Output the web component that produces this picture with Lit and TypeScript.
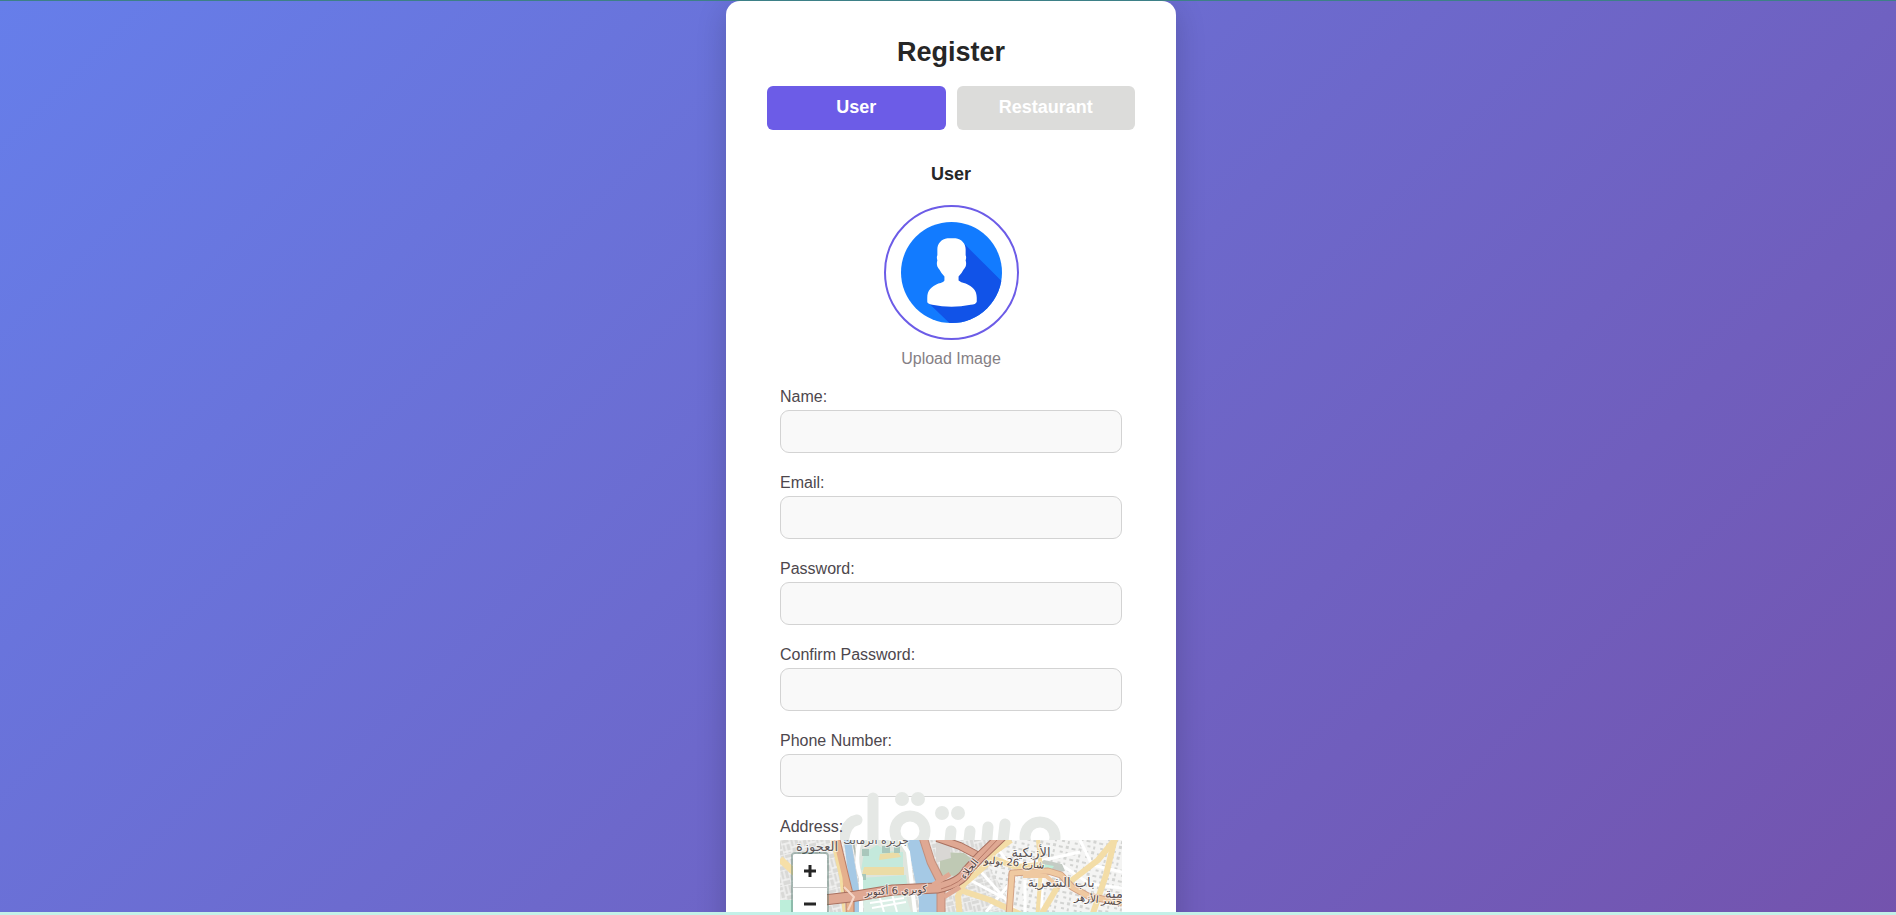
import { LitElement, html, css, svg } from "lit";
import { customElement, state } from "lit/decorators.js";

/** Street map of central Cairo with zoom buttons. */
@customElement("street-map")
class StreetMap extends LitElement {
  static styles = css`
    :host { display: block; position: relative; height: 220px; overflow: hidden; background: #e9e9e7; }
    .tiles { display: block; width: 100%; height: 220px; }
    .zoom {
      position: absolute; top: 12px; left: 11px; display: grid;
      border: 2px solid rgba(70, 110, 100, 0.4); border-radius: 4px; overflow: hidden;
    }
    .zoom button {
      width: 34px; height: 33px; padding: 0; border: 0; background: #fff; color: #262626;
      display: grid; place-items: center; cursor: pointer;
    }
    .zoom button + button { border-top: 1px solid #ccc; }
    .glyph { width: 14px; height: 14px; stroke: #262626; stroke-width: 3; }
    .label { font-family: "DejaVu Sans", "Noto Sans", sans-serif; fill: #5b5456; stroke: #fff; stroke-opacity: 0.6; stroke-width: 2px; paint-order: stroke; text-anchor: middle; }
    .big { font-size: 13px; }
    .mid { font-size: 11px; }
    .small { font-size: 10px; fill: #4d3f40; }
  `;

  private tiles() {
    return svg`
      <defs>
        <pattern id="blocks" width="17" height="15" patternUnits="userSpaceOnUse" patternTransform="rotate(-14)">
          <rect width="17" height="15" fill="#d9d9d7"/>
          <path d="M0 0H17M0 5H9M9 10H17M0 0V15M9 0V15M13 0V10M4 5V15M0 13H9" stroke="#f4f4f3" stroke-width="1.3" fill="none"/>
        </pattern>
        <pattern id="east" width="13" height="11" patternUnits="userSpaceOnUse" patternTransform="rotate(12)">
          <rect width="13" height="11" fill="#f4f4f3"/>
          <path d="M1 2h4v2h-4zM8 1h3v3h-3zM3 7h3v2h-3zM9 7h2v3h-2z" fill="#d3d4d2"/>
        </pattern>
      </defs>
      <rect width="342" height="220" fill="url(#blocks)"/>
      <path d="M215 0H342V220H245L235 70L205 20Z" fill="url(#east)"/>
      <path d="M0 60h13v60h-13z" fill="#bdeeda"/>
      <path d="M0 19L15 33" stroke="#f6dfa8" stroke-width="7"/>
      <path d="M51 0L70 48L75 90" stroke="#fff" stroke-width="3" fill="none"/>

      <path d="M76 0H128L137 72V110H82L84 68Z" fill="#dfe5dd"/>
      <path d="M84 13l13-8 10 6 16 1v15l-42 3zM80 38l46-3 2 15-50 3z" fill="#c4e9dc"/>
      <path d="M84 27h40v8H82zM100 14l18-2 3 5-22 3z" fill="#ebdca6"/>
      <path d="M82 9h7v7h-7zM102 6h8v7h-8zM114 5h6v8h-6zM80 34h6v6h-6z" fill="#a9c7bb"/>
      <path d="M83 60l12-5 30-2 6 19H84z" fill="#d9eee5"/>
      <path d="M90 63l34-5M92 68l34-6M99 55l5 17M112 54l5 18" stroke="#fff" stroke-width="2"/>
      <path d="M64 0H71L79 50V100H70V50Z" fill="#a5c9e5"/>
      <path d="M127 0H144L157 38V120H139V60Z" fill="#a5c9e5"/>
      <path d="M73 0L80 40L81 72" stroke="#aeb7ac" stroke-width="1.5" fill="none"/>
      <path d="M80 0Q74 20 81 38V80M120 0L128 12L135 72V100" stroke="#fff" stroke-width="4" fill="none"/>
      <path d="M56 0L65 38L70 58V100" stroke="#b97d69" stroke-width="9" fill="none"/>
      <path d="M56 0L65 38L70 58V100" stroke="#e5b08d" stroke-width="7" fill="none"/>
      <path d="M52 0L61 38L64 72" stroke="#f3dda2" stroke-width="3" fill="none"/>

      <path d="M160 12L184 13L192 19L176 36L160 35Z" fill="#bfc9b4"/>
      <path d="M156 1L170 6L171 18L156 22Z" fill="#d9d7d4"/>
      <path d="M212 0L226 20L246 24L300 12M195 25L235 70M190 40L224 58M206 72L236 36M245 40V80M262 38V80M280 24L310 44L342 48M300 0L312 25L342 32" stroke="#fff" stroke-width="3" fill="none"/>
      <path d="M252 29l12-9 18 4 3 7-22 5z" fill="#c4cbc4"/>
      <path d="M262 24l12 2-3 4-10-1z" fill="#bdeeda"/>

      <g fill="none" stroke="#f3dda7" stroke-width="6">
        <path d="M231 0L214 12L207 24L184 44L178 56L181 90"/>
        <path d="M180 50L210 60L248 78"/>
        <path d="M209 17L236 27L260 25"/>
        <path d="M337 -3L318 20L291 41"/>
        <path d="M335 -2L326 35L310 82"/>
        <path d="M278 46L258 80"/>
        <path d="M258 0L261 30L257 80" stroke-width="4"/>
      </g>
      <g fill="none" stroke-linejoin="round">
        <path d="M228 90L232 33L268 31L281 35L292 47L308 56L342 63" stroke="#d3a184" stroke-width="7"/>
        <path d="M228 90L232 33L268 31L281 35L292 47L308 56L342 63" stroke="#efc9a1" stroke-width="5"/>
        <path d="M243 36H266L280 48" stroke="#efc9a1" stroke-width="4"/>
        <path d="M143 -3L151 22L161 42V100" stroke="#c18f7d" stroke-width="9"/>
        <path d="M143 -3L151 22L161 42V100" stroke="#dfa893" stroke-width="7"/>
        <path d="M157 -2L180 6L199 16" stroke="#a9705f" stroke-width="8"/>
        <path d="M157 -2L180 6L199 16" stroke="#dfa893" stroke-width="6"/>
        <path d="M44 60L70 57L113 50L157 48Q181 43 187 31L200 17L222 -4" stroke="#a9705f" stroke-width="11"/>
        <path d="M44 60L70 57L113 50L157 48Q181 43 187 31L200 17L222 -4" stroke="#dfa893" stroke-width="9"/>
        <path d="M161 49Q182 43 188 31L200 18L218 -1" stroke="#b87a68" stroke-width="1"/>
        <path d="M153 45L170 34M164 57L180 47" stroke="#dfa893" stroke-width="5"/>
        <path d="M64 47L74 57L68 70" stroke="#f5d7c8" stroke-width="2"/>
      </g>
      <text class="label big" x="37" y="11">العجوزة</text>
      <text class="label mid" x="96" y="4">جزيرة الزمالك</text>
      <text class="label small" x="116" y="54" transform="rotate(-3 116 54)">كوبري 6 أكتوبر</text>
      <text class="label big" x="251" y="17">الأزبكية</text>
      <text class="label small" x="234" y="26" transform="rotate(5 234 26)">شارع 26 يوليو</text>
      <text class="label small" x="192" y="31" transform="rotate(-52 192 31)">الجلاء</text>
      <text class="label big" x="281" y="47">باب الشعرية</text>
      <text class="label small" x="318" y="63" transform="rotate(6 318 63)">جسر الأزهر</text>
      <text class="label big" x="334" y="58">مية</text>
    `;
  }

  render() {
    return html`
      <svg class="tiles" viewBox="0 0 342 220" preserveAspectRatio="xMidYMin slice" role="img" aria-label="Map">${this.tiles()}</svg>
      <div class="zoom">
        <button type="button" aria-label="Zoom in"><svg class="glyph" viewBox="0 0 14 14"><path d="M1 7H13M7 1V13"/></svg></button>
        <button type="button" aria-label="Zoom out"><svg class="glyph" viewBox="0 0 14 14"><path d="M1 7H13"/></svg></button>
      </div>
    `;
  }
}

const FIELDS = [
  { id: "name", label: "Name:", type: "text" },
  { id: "email", label: "Email:", type: "email" },
  { id: "password", label: "Password:", type: "password" },
  { id: "confirm", label: "Confirm Password:", type: "password" },
  { id: "phone", label: "Phone Number:", type: "tel" },
];

@customElement("app-root")
class AppRoot extends LitElement {
  @state() private role = "User";

  static styles = css`
    :host {
      display: flex; justify-content: center; align-items: flex-start;
      height: 100vh; box-sizing: border-box; overflow: hidden; padding-left: 6px;
      border-top: 1px solid #3d8087; border-bottom: 3px solid #c3f1e8;
      background: linear-gradient(135deg, #667eea 0%, #764ba2 119%) border-box;
      font: 16px/18px "Liberation Sans", Arial, sans-serif; color: #262626;
    }
    * { box-sizing: border-box; }
    .card {
      width: 100%; max-width: 450px; padding: 35px 41px; background: #fff;
      border-radius: 14px; box-shadow: 0 8px 30px rgba(0, 0, 0, 0.18);
      display: flex; flex-direction: column;
    }
    h1 { margin: 0 0 18px; font-size: 27px; line-height: 32px; text-align: center; }
    .roles { display: grid; grid-template-columns: 1fr 1fr; gap: 11px; }
    .role {
      height: 44px; padding: 0 0 2px; border: 0; border-radius: 6px; background: #dcdcda; color: #fff;
      font: bold 18px/20px "Liberation Sans", Arial, sans-serif; cursor: pointer;
    }
    .role.active { background: #6c5ce7; }
    h2 { margin: 34px 0 21px; font-size: 18px; line-height: 20px; text-align: center; }
    .upload { display: flex; flex-direction: column; align-items: center; gap: 10px; color: #858085; cursor: pointer; }
    .file { position: absolute; width: 1px; height: 1px; opacity: 0; }
    .avatar {
      width: 135px; height: 135px; border: 2px solid #6c5ce7; border-radius: 50%;
      display: grid; place-items: center;
    }
    .avatar svg { width: 101px; height: 101px; display: block; }
    .fields { display: grid; gap: 21px; padding: 20px 13px 0; }
    .field { display: grid; gap: 4px; position: relative; color: #4d474d; }
    .caption { position: relative; z-index: 1; }
    .box {
      width: 100%; height: 43px; padding: 0 11px; border: 1px solid #d3d3d3; border-radius: 9px;
      background: #f9f9f9; font: inherit; color: inherit;
    }
    .mark {
      position: absolute; top: -28px; left: 50%; width: 222px; height: 50px; transform: translateX(-50%);
      pointer-events: none; fill: #e5e8e5; stroke: #e5e8e5;
    }
    .mark .arc { fill: none; stroke-width: 11; stroke-linecap: round; }
    .mark .dot { stroke: none; }
  `;

  private avatar() {
    return svg`
      <clipPath id="disc"><circle cx="50" cy="50" r="50"/></clipPath>
      <circle cx="50" cy="50" r="50" fill="#127bff"/>
      <path clip-path="url(#disc)" d="M63 22L102 61V102H50L27 80L50 56Z" fill="#1153e8"/>
      <path fill="#fff" d="M46 16H54C60 17 64 21 64 27V33Q65 35 64 38Q65 41 64 44Q63 46 62 47Q60 51 57 54V58Q59 60 64 61C71 64 75 68 75 75V79Q74 82 69 82Q50 86 31 82Q26 81 26 79V75C26 68 30 64 37 61Q42 60 43 58V54Q40 51 38 47Q37 46 36 44Q35 41 36 38Q35 35 36 33V27C36 21 40 17 46 16Z"/>
    `;
  }

  render() {
    return html`
      <main class="card">
        <h1>Register</h1>
        <div class="roles">
          ${["User", "Restaurant"].map(
            (r) => html`<button type="button" class="role ${this.role === r ? "active" : ""}" @click=${() => (this.role = r)}>${r}</button>`
          )}
        </div>
        <h2>${this.role}</h2>
        <label class="upload">
          <span class="avatar"><svg viewBox="0 0 100 100" aria-hidden="true">${this.avatar()}</svg></span>
          Upload Image
          <input class="file" type="file" accept="image/*" />
        </label>
        <form class="fields">
          ${FIELDS.map(
            (f) => html`<div class="field"><label for=${f.id}>${f.label}</label><input class="box" id=${f.id} type=${f.type} /></div>`
          )}
          <div class="field">
            <span class="caption">Address:</span>
            <street-map></street-map>
            <svg class="mark" viewBox="0 0 222 50" aria-hidden="true">
              <path class="arc" d="M17 30Q5 32 3 54M33 8V60M111 41L109 60M130 41L128 60M148 37L146 60M165 34L162 60"/>
              <circle class="arc" cx="70" cy="41" r="15"/>
              <circle class="arc" cx="200" cy="47" r="15"/>
              <circle class="dot" cx="62" cy="9" r="7"/><circle class="dot" cx="78" cy="9" r="7"/>
              <circle class="dot" cx="102" cy="23" r="7"/><circle class="dot" cx="118" cy="23" r="7"/>
            </svg>
          </div>
        </form>
      </main>
    `;
  }
}
